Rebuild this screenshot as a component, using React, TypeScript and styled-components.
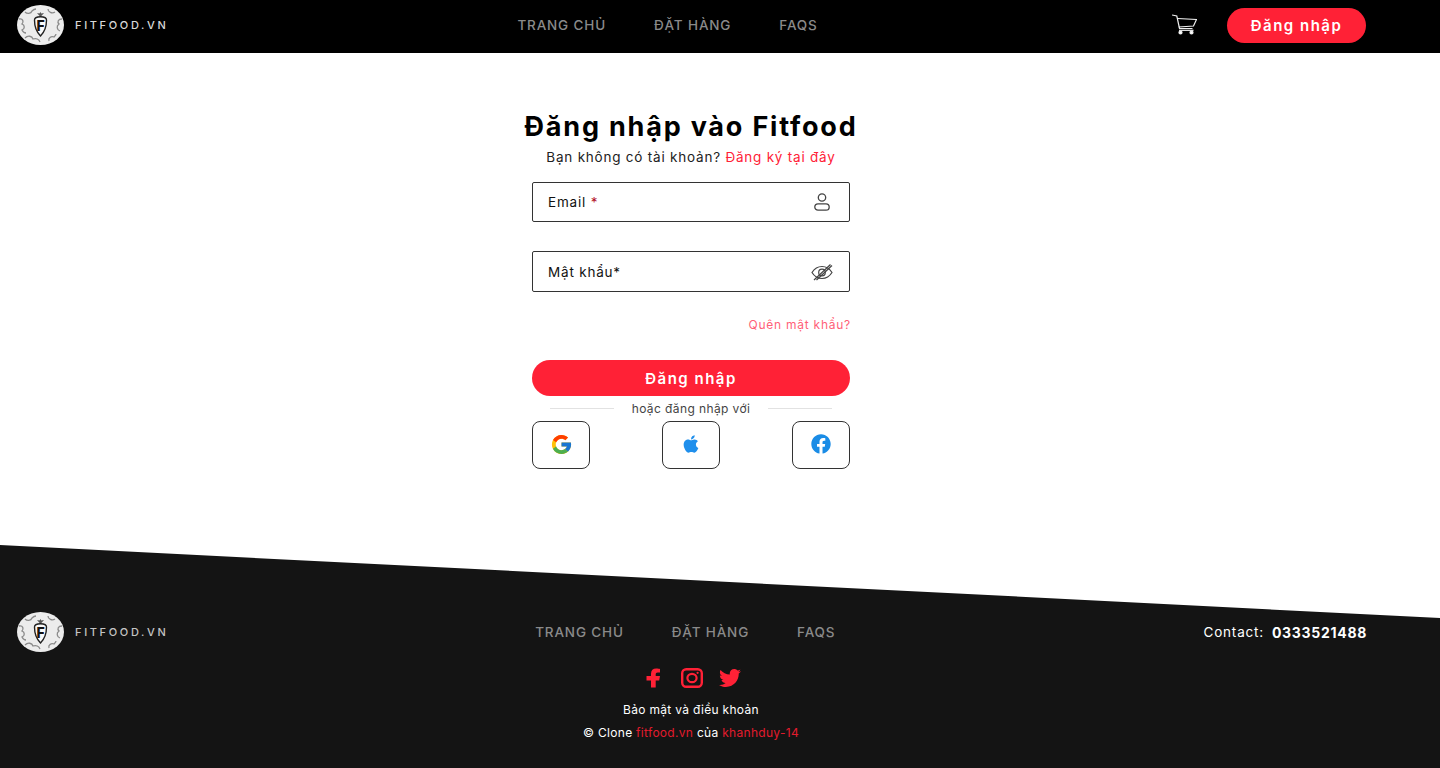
import React from "react";
import styled, { createGlobalStyle } from "styled-components";
import { FaApple, FaFacebook, FaTwitter } from "react-icons/fa";
import { FcGoogle } from "react-icons/fc";

const GlobalStyle = createGlobalStyle`
  html, body {
    margin: 0;
    padding: 0;
    background: #fff;
    overflow: hidden;
  }
  * {
    box-sizing: border-box;
  }
  body {
    font-family: Inter, "Noto Sans", sans-serif;
    color: #111;
  }
`;

const Page = styled.div`
  width: 1440px;
  height: 768px;
  display: flex;
  flex-direction: column;
`;

const Header = styled.header`
  height: 53px;
  background: #000;
  display: flex;
  align-items: center;
  justify-content: space-between;
  padding: 0 74px 3px 17px;
`;

const Brand = styled.div`
  width: 150px;
  display: flex;
  align-items: center;
  gap: 11px;
`;

const LogoMark = styled.svg`
  flex-shrink: 0;
`;

const BrandName = styled.span<{ $muted?: boolean }>`
  color: ${(p) => (p.$muted ? "#c4c4c4" : "#d8d8d8")};
  font-size: 11px;
  font-weight: 500;
  letter-spacing: 2.65px;
  white-space: nowrap;
`;

const Nav = styled.nav`
  display: flex;
  gap: 48px;
`;

const NavLink = styled.a`
  color: #8a8a8a;
  font-size: 13.5px;
  font-weight: 500;
  letter-spacing: 0.85px;
  white-space: nowrap;
`;

const HeaderRight = styled.div`
  display: flex;
  align-items: center;
  gap: 30px;
  padding-left: 4px;
`;

const LoginPill = styled.button`
  width: 139px;
  height: 35px;
  border: 0;
  border-radius: 18px;
  background: #ff2136;
  color: #fff;
  font-family: inherit;
  font-size: 15px;
  font-weight: 600;
  letter-spacing: 1.5px;
`;

const Main = styled.main`
  width: 1382px;
  height: 492px;
  display: flex;
  flex-direction: column;
  align-items: center;
  padding-top: 58px;
`;

const Title = styled.h1`
  margin: 0;
  font-size: 27px;
  line-height: 32px;
  font-weight: 700;
  color: #000;
  letter-spacing: 1.8px;
  white-space: nowrap;
`;

const Subtitle = styled.p`
  margin: 4px 0 0;
  font-size: 13.5px;
  line-height: 20px;
  color: #222;
  letter-spacing: 0.78px;
`;

const Accent = styled.a`
  color: #ff2136;
`;

const Form = styled.form`
  width: 318px;
  margin-top: 15px;
  display: flex;
  flex-direction: column;
`;

const Field = styled.div<{ $tall?: boolean }>`
  height: ${(p) => (p.$tall ? 41 : 40)}px;
  margin-bottom: ${(p) => (p.$tall ? 0 : 29)}px;
  border: 1px solid #333;
  border-radius: 2px;
  display: flex;
  align-items: center;
  justify-content: space-between;
  padding: 0 15px;
`;

const FieldLabel = styled.label`
  font-size: 13.5px;
  letter-spacing: 0.8px;
  color: #111;
`;

const FieldIcon = styled.span`
  width: 24px;
  display: flex;
  justify-content: center;
`;

const Required = styled.span`
  color: #b3122a;
`;

const Forgot = styled.a`
  align-self: flex-end;
  margin: 26px -1px 0 0;
  font-size: 12px;
  line-height: 14px;
  letter-spacing: 0.75px;
  color: #ff5f78;
`;

const SubmitButton = styled.button`
  height: 36px;
  margin-top: 28px;
  border: 0;
  border-radius: 18px;
  background: #ff2136;
  color: #fff;
  font-family: inherit;
  font-size: 15px;
  font-weight: 600;
  letter-spacing: 1.5px;
`;

const Divider = styled.div`
  height: 25px;
  padding: 0 18px;
  display: flex;
  align-items: center;
  gap: 18px;
  font-size: 12px;
  letter-spacing: 0.4px;
  color: #444;
  white-space: nowrap;
`;

const DividerLine = styled.span`
  flex: 1;
  height: 1px;
  background: #e2e2e2;
`;

const SocialRow = styled.div`
  display: flex;
  justify-content: space-between;
`;

const SocialButton = styled.button<{ $color?: string; $size?: number }>`
  width: 58px;
  height: 48px;
  padding: 0 0 2px;
  background: #fff;
  border: 1px solid #333;
  border-radius: 8px;
  display: flex;
  align-items: center;
  justify-content: center;
  font-size: ${(p) => p.$size || 20}px;
  color: ${(p) => p.$color || "#000"};
`;

const Footer = styled.footer`
  flex: 1;
  background: #141414;
  clip-path: polygon(0 0, 100% 73px, 100% 100%, 0 100%);
  display: flex;
  flex-direction: column;
  padding-top: 67px;
`;

const FooterTop = styled.div`
  height: 40px;
  display: flex;
  align-items: center;
  justify-content: space-between;
  padding: 0 73px 0 17px;
`;

const Contact = styled.div`
  display: flex;
  align-items: center;
  gap: 8px;
  color: #fff;
  font-size: 13.5px;
  letter-spacing: 0.8px;
`;

const Phone = styled.strong`
  font-size: 14px;
  font-weight: 700;
  letter-spacing: 0.7px;
`;

const FooterBottom = styled.div`
  width: 1382px;
  display: flex;
  flex-direction: column;
  align-items: center;
  padding-top: 15px;
  color: #fff;
`;

const Socials = styled.div`
  display: flex;
  align-items: center;
  gap: 16px;
  color: #ff2136;
  font-size: 22px;
  height: 22px;
`;

const FooterLine = styled.div<{ $gap: number }>`
  margin-top: ${(p) => p.$gap}px;
  font-size: 12px;
  line-height: 14px;
  letter-spacing: 0.3px;
  white-space: nowrap;
`;

const FooterAccent = styled.a`
  color: #e21b2d;
`;

const Logo = () => (
  <LogoMark width="47" height="40" viewBox="0 0 47 40" aria-hidden="true">
    <ellipse cx="23.500" cy="20" rx="23.500" ry="20" fill="#ececec" />
    <g fill="none" stroke="#8a8a8a" strokeWidth="1.300">
      <path d="M2 14c4-1 5 3 3 5 3 1 3 5 0 6 1 2 2 3 4 3" />
      <path d="M8 33c3-3 7-2 8 1 3-1 6 0 7 3" />
      <path d="M45 14c-4 0-5 3-3 5-3 2-2 6 1 7" />
      <path d="M32 36c-1-3 2-5 5-4 1-1 2-2 2-3" />
      <path d="M8 7c2 2 6 2 7-1 1-1 2-2 4-2" />
      <path d="M31 4c0 3 4 5 7 3" />
    </g>
    <path d="M23.500 12l-3.500-4 2.500.4.900-1.400.9 1.400 2.700-.4z" fill="#555" />
    <path
      d="M17.500 15c0-2 2.500-3.200 6-3.200s6 1.200 6 3.200c0 6-2 12-6 16-4-4-6-10-6-16z"
      fill="#fafafa"
      stroke="#222"
      strokeWidth="1.400"
    />
    <text x="19.500" y="26" fontFamily="Inter, sans-serif" fontWeight="800" fontSize="14" fill="#111">
      F
    </text>
  </LogoMark>
);

const CartIcon = () => (
  <svg width="25" height="22" viewBox="0 0 25 22" fill="none" stroke="#f2f2f2" strokeWidth="1.200" aria-hidden="true">
    <path d="M0 1l4.800 1 2.700 12.500h13" />
    <path d="M5.500 4.500l19 1-3 6.500-14.800 1" />
    <circle cx="8.500" cy="18.500" r="1.500" fill="#fff" />
    <circle cx="19.500" cy="18.500" r="1.500" fill="#fff" />
    <path d="M7 16.300h14.500" />
  </svg>
);

const UserIcon = () => (
  <svg width="16" height="18" viewBox="0 0 16 18" fill="none" stroke="#444" strokeWidth="1.300" aria-hidden="true">
    <circle cx="8" cy="4.500" r="3.700" />
    <rect x="0.800" y="10.800" width="14.400" height="6.400" rx="3.200" />
  </svg>
);

const EyeOffIcon = () => (
  <svg width="22" height="18" viewBox="0 0 22 18" fill="none" stroke="#444" strokeWidth="1.200" aria-hidden="true">
    <path d="M1 9.500c2.500-4 6-6 10-6s7.500 2 10 6c-2.500 4-6 6-10 6s-7.500-2-10-6z" />
    <circle cx="11" cy="9.500" r="3.300" />
    <path d="M3 17L19.500 1.500" />
    <path d="M5.500 17L21 2.500" />
  </svg>
);

const FacebookGlyph = () => (
  <svg width="24" height="20" viewBox="0 0 24 20" fill="currentColor" aria-hidden="true">
    <path d="M10 19.500v-7H5.500V8H10V5.800C10 2.300 12 .500 15.200.500c1.500 0 3.300.300 3.800.400v3.700h-2.200c-1.600 0-2.100.900-2.100 1.900V8H19l-.8 4.500h-3.500v7z" />
  </svg>
);

const InstagramGlyph = () => (
  <svg width="22" height="20" viewBox="0 0 22 20" fill="none" stroke="currentColor" aria-hidden="true">
    <rect x="1.200" y="1.200" width="19.600" height="17.600" rx="4" strokeWidth="2.400" />
    <ellipse cx="11" cy="10" rx="4.600" ry="4.200" strokeWidth="2.200" />
    <circle cx="16.600" cy="4.800" r="1.100" fill="currentColor" stroke="none" />
  </svg>
);

const menu = ["TRANG CHỦ", "ĐẶT HÀNG", "FAQS"];

const MenuLinks = () => (
  <Nav>
    {menu.map((item) => (
      <NavLink key={item}>{item}</NavLink>
    ))}
  </Nav>
);

const App = () => {
  return (
    <Page>
      <GlobalStyle />
      <Header>
        <Brand>
          <Logo />
          <BrandName>FITFOOD.VN</BrandName>
        </Brand>
        <MenuLinks />
        <HeaderRight>
          <CartIcon />
          <LoginPill>Đăng nhập</LoginPill>
        </HeaderRight>
      </Header>
      <Main>
        <Title>Đăng nhập vào Fitfood</Title>
        <Subtitle>
          Bạn không có tài khoản? <Accent>Đăng ký tại đây</Accent>
        </Subtitle>
        <Form>
          <Field>
            <FieldLabel>
              Email <Required>*</Required>
            </FieldLabel>
            <FieldIcon>
              <UserIcon />
            </FieldIcon>
          </Field>
          <Field $tall>
            <FieldLabel>Mật khẩu*</FieldLabel>
            <FieldIcon>
              <EyeOffIcon />
            </FieldIcon>
          </Field>
          <Forgot>Quên mật khẩu?</Forgot>
          <SubmitButton type="button">Đăng nhập</SubmitButton>
          <Divider>
            <DividerLine />
            hoặc đăng nhập với
            <DividerLine />
          </Divider>
          <SocialRow>
            <SocialButton type="button" $size={23}>
              <FcGoogle />
            </SocialButton>
            <SocialButton type="button" $color="#1f8fec">
              <FaApple />
            </SocialButton>
            <SocialButton type="button" $color="#1a8ce6">
              <FaFacebook />
            </SocialButton>
          </SocialRow>
        </Form>
      </Main>
      <Footer>
        <FooterTop>
          <Brand>
            <Logo />
            <BrandName $muted>FITFOOD.VN</BrandName>
          </Brand>
          <MenuLinks />
          <Contact>
            Contact: <Phone>0333521488</Phone>
          </Contact>
        </FooterTop>
        <FooterBottom>
          <Socials>
            <FacebookGlyph />
            <InstagramGlyph />
            <FaTwitter />
          </Socials>
          <FooterLine $gap={14}>Bảo mật và điều khoản</FooterLine>
          <FooterLine $gap={9}>
            © Clone <FooterAccent>fitfood.vn</FooterAccent> của <FooterAccent>khanhduy-14</FooterAccent>
          </FooterLine>
        </FooterBottom>
      </Footer>
    </Page>
  );
};

export default App;
